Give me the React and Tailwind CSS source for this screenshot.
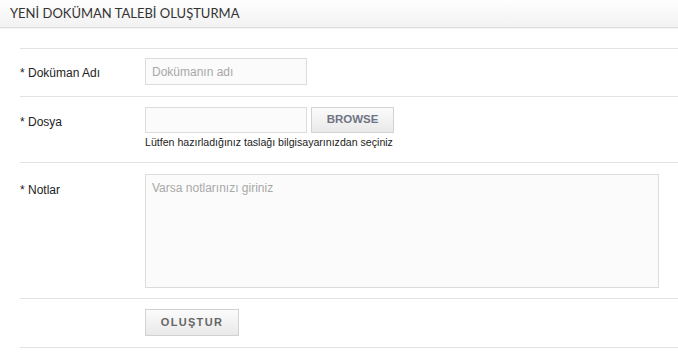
export default function App() {
  const arial = { fontFamily: '"Liberation Sans", Arial, sans-serif' };
  return (
    <div className="w-[678px] h-[362px] bg-white overflow-hidden" style={arial}>
      <div className="h-[28px] bg-gradient-to-b from-[#fefefe] to-[#f2f2f2] border-b border-[#dedede] flex items-center pl-[10px]">
        <span className="text-[13px] text-[#333]" style={{ fontFamily: 'Lato, "Open Sans", sans-serif' }}>
          YENİ DOKÜMAN TALEBİ OLUŞTURMA
        </span>
      </div>
      <div className="h-px bg-[#f3f3f3]" />
      <div className="pl-[20px] pt-[19px]">
        <div className="border-t border-[#e3e3e3] flex h-[48px]">
          <div className="w-[125px] pt-[17px] text-[12px] leading-[15px] text-[#222]">* Doküman Adı</div>
          <div className="pt-[9px]">
            <div className="w-[162px] h-[27px] border border-[#dcdcdc] bg-[#fbfbfb] flex items-center pl-[6px] text-[12px] text-[#a8a8a8]">
              Dokümanın adı
            </div>
          </div>
        </div>
        <div className="border-t border-[#e3e3e3] flex h-[66px]">
          <div className="w-[125px] pt-[18px] text-[12px] leading-[15px] text-[#222]">* Dosya</div>
          <div className="pt-[10px]">
            <div className="flex gap-[4px]">
              <div className="w-[162px] h-[26px] border border-[#dcdcdc] bg-[#fbfbfb]" />
              <div className="w-[83px] h-[26px] border border-[#d2d2d2] bg-gradient-to-b from-[#fbfbfb] to-[#e9e9e9] flex items-center justify-center text-[11.5px] font-bold text-[#6f7484]">
                BROWSE
              </div>
            </div>
            <div className="mt-[3px] text-[10.6px] leading-[13px] text-[#222]">
              Lütfen hazırladığınız taslağı bilgisayarınızdan seçiniz
            </div>
          </div>
        </div>
        <div className="border-t border-[#e3e3e3] flex h-[136px]">
          <div className="w-[125px] pt-[20px] text-[12px] leading-[15px] text-[#222]">* Notlar</div>
          <div className="pt-[11px]">
            <div className="w-[514px] h-[114px] border border-[#dcdcdc] bg-[#fbfbfb] pl-[6px] pt-[6px] text-[12px] leading-[15px] text-[#a8a8a8]">
              Varsa notlarınızı giriniz
            </div>
          </div>
        </div>
        <div className="border-t border-[#e3e3e3] border-b flex h-[50px]">
          <div className="w-[125px]" />
          <div className="pt-[10px]">
            <div className="w-[94px] h-[27px] border border-[#d2d2d2] bg-gradient-to-b from-[#fbfbfb] to-[#e9e9e9] flex items-center justify-center text-[11px] font-bold text-[#666] tracking-[1.3px]">
              OLUŞTUR
            </div>
          </div>
        </div>
      </div>
    </div>
  );
}
